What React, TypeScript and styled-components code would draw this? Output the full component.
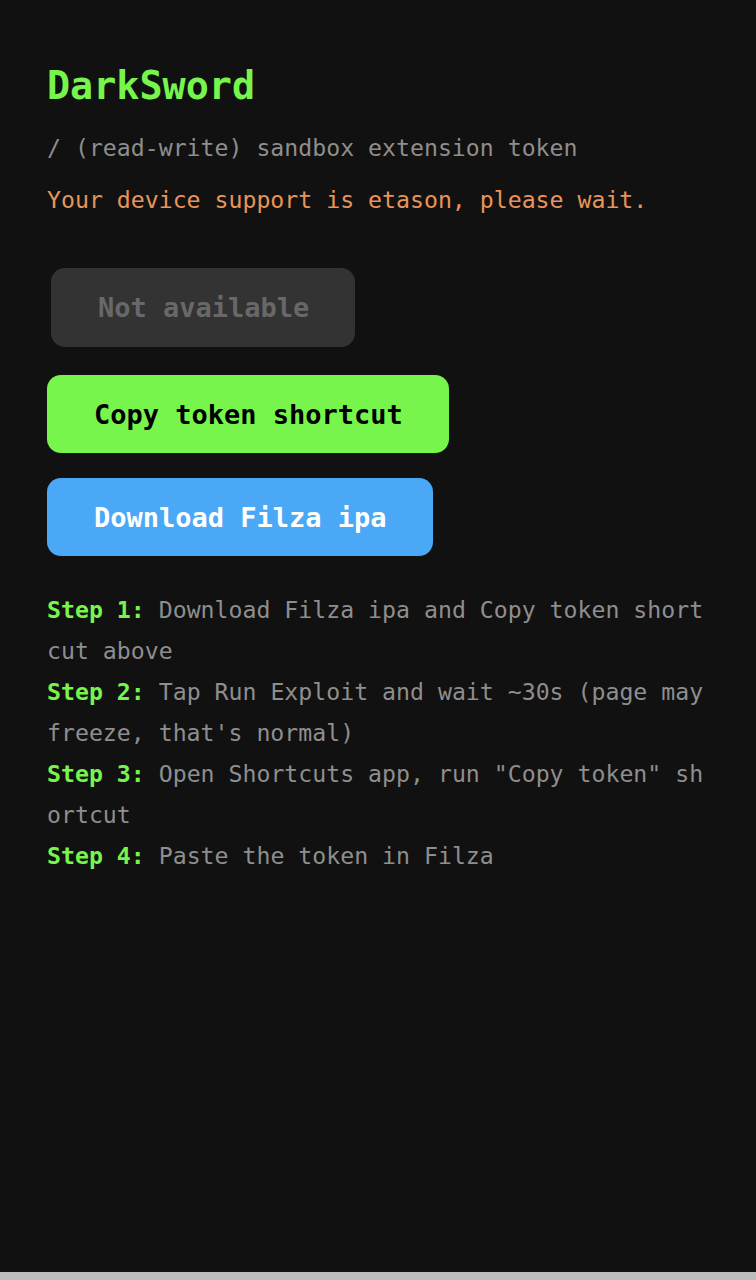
import React from 'react'
import styled, { createGlobalStyle } from 'styled-components'

const GlobalStyle = createGlobalStyle`
  html {
    background: #bcbcbc;
  }
  body {
    margin: 0;
    font-family: "DejaVu Sans Mono", "Liberation Mono", monospace;
  }
`

const colors = {
  bg: '#111111',
  green: '#77f54d',
  blue: '#4aa8f6',
  orange: '#e8945a',
  muted: '#8e8e8e',
  disabledBg: '#333333',
  disabledText: '#686868',
}

type Variant = 'disabled' | 'green' | 'blue'

const S = {
  Page: styled.main`
    box-sizing: border-box;
    min-height: 1272px;
    background: ${colors.bg};
    padding: 63px 47px 0;
    display: flex;
    flex-direction: column;
    align-items: flex-start;
  `,
  Title: styled.h1`
    margin: 0;
    color: ${colors.green};
    font-size: 38.4px;
    line-height: 46px;
    font-weight: bold;
  `,
  Subtitle: styled.p`
    margin: 25px 0 0;
    color: ${colors.muted};
    font-size: 23.2px;
    line-height: 28px;
  `,
  Status: styled.p`
    margin: 24px 0 0;
    color: ${colors.orange};
    font-size: 23.2px;
    line-height: 28px;
  `,
  Actions: styled.div`
    margin-top: 54px;
    display: flex;
    flex-direction: column;
    align-items: flex-start;
  `,
  Button: styled.button<{ $variant: Variant }>`
    box-sizing: border-box;
    height: ${({ $variant }) => ($variant === 'disabled' ? '79px' : '78px')};
    margin: ${({ $variant }) =>
      $variant === 'disabled' ? '0 0 28px 4px' : $variant === 'green' ? '0 0 25px' : '0'};
    padding: 0 46px 0 47px;
    border: none;
    border-radius: 14px;
    font-family: inherit;
    font-size: 27px;
    font-weight: bold;
    background: ${({ $variant }) =>
      $variant === 'disabled' ? colors.disabledBg : $variant === 'green' ? colors.green : colors.blue};
    color: ${({ $variant }) =>
      $variant === 'disabled' ? colors.disabledText : $variant === 'green' ? '#000' : '#fff'};
    cursor: ${({ $variant }) => ($variant === 'disabled' ? 'default' : 'pointer')};
  `,
  Steps: styled.ol`
    list-style: none;
    margin: 33px 0 0;
    padding: 0;
    width: 100%;
  `,
  Step: styled.li`
    color: ${colors.muted};
    font-size: 23.2px;
    line-height: 41px;
    word-break: break-all;
  `,
  StepLabel: styled.strong`
    color: ${colors.green};
    font-weight: bold;
  `,
}

const steps = [
  'Download Filza ipa and Copy token shortcut above',
  "Tap Run Exploit and wait ~30s (page may freeze, that's normal)",
  'Open Shortcuts app, run "Copy token" shortcut',
  'Paste the token in Filza',
]

export default function App() {
  return (
    <>
      <GlobalStyle />
      <S.Page>
        <S.Title>DarkSword</S.Title>
        <S.Subtitle>/ (read-write) sandbox extension token</S.Subtitle>
        <S.Status>Your device support is etason, please wait.</S.Status>
        <S.Actions>
          <S.Button $variant="disabled" disabled>
            Not available
          </S.Button>
          <S.Button $variant="green">Copy token shortcut</S.Button>
          <S.Button $variant="blue">Download Filza ipa</S.Button>
        </S.Actions>
        <S.Steps>
          {steps.map((text, i) => (
            <S.Step key={i}>
              <S.StepLabel>Step {i + 1}:</S.StepLabel> <span>{text}</span>
            </S.Step>
          ))}
        </S.Steps>
      </S.Page>
    </>
  )
}
